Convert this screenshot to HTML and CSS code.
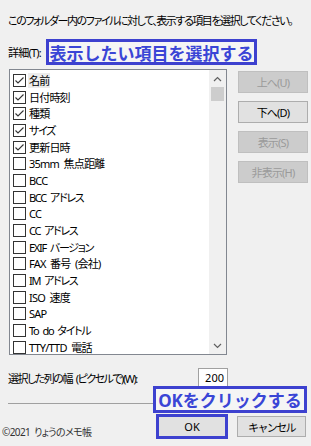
FILE: index.html
```html
<!DOCTYPE html>
<html lang="ja">
<head>
    <meta charset="UTF-8">
    <meta name="viewport" content="width=device-width, initial-scale=1.0">
    <title>詳細表示の設定</title>
    <link rel="stylesheet" href="styles.css">
</head>
<body>
    <div class="dialog">
        <p class="intro">このフォルダー内のファイルに対して、表示する項目を選択してください。</p>
        <div class="detail-row">
            <span class="detail-label">詳細(T):</span>
            <span class="callout callout-top">表示したい項目を選択する</span>
        </div>
        <div class="main">
            <div class="listbox">
                <ul class="items">
                    <li class="item"><span class="box"><svg width="11" height="11" viewBox="0 0 11 11"><polyline points="1.5,5.5 4,8 9.5,2.5" fill="none" stroke="#333" stroke-width="1.1"/></svg></span><span class="name focus">名前</span></li>
                    <li class="item"><span class="box"><svg width="11" height="11" viewBox="0 0 11 11"><polyline points="1.5,5.5 4,8 9.5,2.5" fill="none" stroke="#333" stroke-width="1.1"/></svg></span><span class="name">日付時刻</span></li>
                    <li class="item"><span class="box"><svg width="11" height="11" viewBox="0 0 11 11"><polyline points="1.5,5.5 4,8 9.5,2.5" fill="none" stroke="#333" stroke-width="1.1"/></svg></span><span class="name">種類</span></li>
                    <li class="item"><span class="box"><svg width="11" height="11" viewBox="0 0 11 11"><polyline points="1.5,5.5 4,8 9.5,2.5" fill="none" stroke="#333" stroke-width="1.1"/></svg></span><span class="name kana">サイズ</span></li>
                    <li class="item"><span class="box"><svg width="11" height="11" viewBox="0 0 11 11"><polyline points="1.5,5.5 4,8 9.5,2.5" fill="none" stroke="#333" stroke-width="1.1"/></svg></span><span class="name">更新日時</span></li>
                    <li class="item"><span class="box"></span><span class="name">35mm 焦点距離</span></li>
                    <li class="item"><span class="box"></span><span class="name">BCC</span></li>
                    <li class="item"><span class="box"></span><span class="name kana">BCC アドレス</span></li>
                    <li class="item"><span class="box"></span><span class="name">CC</span></li>
                    <li class="item"><span class="box"></span><span class="name kana">CC アドレス</span></li>
                    <li class="item"><span class="box"></span><span class="name kana">EXIF バージョン</span></li>
                    <li class="item"><span class="box"></span><span class="name">FAX 番号 (会社)</span></li>
                    <li class="item"><span class="box"></span><span class="name kana">IM アドレス</span></li>
                    <li class="item"><span class="box"></span><span class="name">ISO 速度</span></li>
                    <li class="item"><span class="box"></span><span class="name">SAP</span></li>
                    <li class="item"><span class="box"></span><span class="name kana">To do タイトル</span></li>
                    <li class="item"><span class="box"></span><span class="name">TTY/TTD 電話</span></li>
                </ul>
                <div class="scrollbar">
                    <span class="arrow"><svg width="9" height="6" viewBox="0 0 9 6"><polyline points="1,5 4.5,1.5 8,5" fill="none" stroke="#606060" stroke-width="1.2"/></svg></span>
                    <span class="thumb"></span>
                    <span class="track"></span>
                    <span class="arrow"><svg width="9" height="6" viewBox="0 0 9 6"><polyline points="1,1 4.5,4.5 8,1" fill="none" stroke="#606060" stroke-width="1.2"/></svg></span>
                </div>
            </div>
            <div class="side-buttons">
                <button class="btn" disabled>上へ(U)</button>
                <button class="btn">下へ(D)</button>
                <button class="btn" disabled>表示(S)</button>
                <button class="btn" disabled>非表示(H)</button>
            </div>
        </div>
        <div class="width-row">
            <label class="width-label">選択した列の幅 (ピクセルで)(W):</label>
            <span class="num-input">200</span>
        </div>
        <div class="footer">
            <hr class="separator">
            <span class="callout callout-bottom">OKをクリックする</span>
            <div class="bottom-row">
                <span class="copyright">©2021&nbsp;&nbsp;りょうのメモ帳</span>
                <div class="actions">
                    <span class="ok-mark"><button class="btn ok">OK</button></span>
                    <button class="btn kana">キャンセル</button>
                </div>
            </div>
        </div>
    </div>
</body>
</html>
```

FILE: styles.css
```css
* {
    box-sizing: border-box;
}
body {
    margin: 0;
    background-color: #f0f0f0;
    font-family: "Noto Sans", "Noto Sans CJK JP", sans-serif;
    font-size: 11px;
    letter-spacing: -0.8px;
    word-spacing: 2.5px;
    color: #000;
    font-feature-settings: "palt";
}
.dialog {
    width: 311px;
    height: 446px;
    overflow: hidden;
}
.intro {
    margin: 0;
    padding: 13px 0 0 8px;
    line-height: 16px;
    letter-spacing: -1.45px;
    white-space: nowrap;
}
.kana {
    letter-spacing: -1.3px;
}
.detail-row {
    display: flex;
    align-items: center;
    margin-top: 10px;
    padding-left: 8px;
    height: 26px;
}
.detail-label {
    width: 38px;
    flex-shrink: 0;
    white-space: nowrap;
}
/* 青い注釈の枠 */
.callout {
    display: flex;
    align-items: center;
    justify-content: center;
    border: 3px solid #3d41cf;
    background-color: #f5f5f5;
    color: #3a45d6;
    font-weight: bold;
    font-size: 17px;
    letter-spacing: 0;
    word-spacing: 0;
    font-feature-settings: normal;
    white-space: nowrap;
}
.callout-top {
    width: 211px;
    height: 26px;
}
.main {
    display: flex;
    gap: 11px;
    margin-top: 4px;
    padding-left: 9px;
}
.listbox {
    display: flex;
    width: 218px;
    height: 286px;
    border: 1px solid #828790;
    background-color: #fff;
    overflow: hidden;
}
.items {
    flex: 1;
    list-style: none;
    margin: 0;
    padding: 2px 0 0 3px;
}
.item {
    display: flex;
    align-items: center;
    gap: 2px;
    height: 16.7px;
    white-space: nowrap;
}
.box {
    display: flex;
    width: 13px;
    height: 13px;
    border: 1px solid #333;
    background-color: #fff;
    flex-shrink: 0;
}
.name {
    padding: 0 1px;
    line-height: 15px;
}
.name.focus {
    background-color: #ececec;
}
.scrollbar {
    display: flex;
    flex-direction: column;
    align-items: center;
    width: 17px;
    background-color: #f0f0f0;
}
.arrow {
    display: flex;
    align-items: center;
    justify-content: center;
    height: 17px;
}
.thumb {
    width: 13px;
    height: 14px;
    background-color: #cdcdcd;
}
.track {
    flex: 1;
}
.side-buttons {
    display: flex;
    flex-direction: column;
    gap: 8px;
    padding-top: 2px;
}
.btn {
    width: 70px;
    height: 22px;
    padding: 0;
    border: 1px solid #adadad;
    background-color: #e1e1e1;
    font-family: inherit;
    font-size: 11px;
    letter-spacing: -0.8px;
    color: #000;
}
.btn.kana {
    letter-spacing: -1.6px;
}
.btn:disabled {
    background-color: #cccccc;
    border-color: #bfbfbf;
    color: #9a9a9a;
}
.width-row {
    display: flex;
    align-items: center;
    height: 20px;
    margin-top: 13px;
    padding-left: 8px;
}
.width-label {
    width: 190px;
    letter-spacing: -1.5px;
    white-space: nowrap;
}
.num-input {
    width: 30px;
    height: 20px;
    border: 1px solid #a0a0a0;
    background-color: #fff;
    text-align: right;
    padding-right: 3px;
    line-height: 18px;
    letter-spacing: 0;
}
.footer {
    position: relative;
    padding-top: 15px;
}
.separator {
    margin: 0 0 0 8px;
    width: 296px;
    border: none;
    border-top: 1px solid #a0a0a0;
}
.callout-bottom {
    position: absolute;
    left: 153px;
    top: -2px;
    width: 154px;
    height: 27px;
}
.bottom-row {
    display: flex;
    justify-content: space-between;
    height: 25px;
    margin-top: 10px;
    padding: 0 5px 0 2px;
}
.copyright {
    align-self: flex-end;
    font-size: 10px;
    line-height: 14px;
    letter-spacing: -0.6px;
    word-spacing: 0;
    color: #333;
}
.actions {
    display: flex;
    align-items: center;
    gap: 9px;
}
.ok-mark {
    display: flex;
    width: 72px;
    height: 25px;
    border: 3px solid #3d41cf;
}
.ok-mark .btn {
    width: 100%;
    height: 100%;
    border: none;
    letter-spacing: 0;
}
.actions > .btn {
    width: 69px;
    height: 21px;
}
```
